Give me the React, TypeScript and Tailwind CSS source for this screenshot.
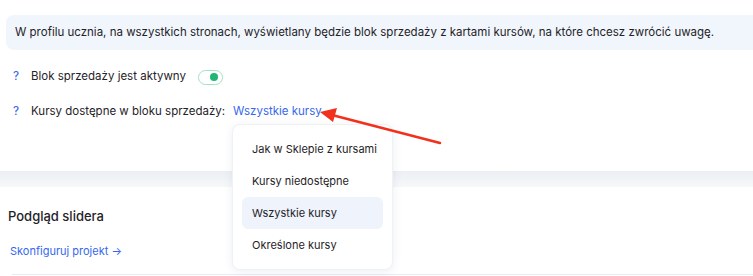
import React from 'react'

const options = ['Jak w Sklepie z kursami', 'Kursy niedostępne', 'Wszystkie kursy', 'Określone kursy']

export default function App() {
  const selected = 'Wszystkie kursy'

  return (
    <div className="relative w-[753px] h-[276px] overflow-hidden bg-white font-['Inter',sans-serif] text-[11.5px] text-[#1f2328]">
      {/* Info box */}
      <div className="pt-[15px] pl-[6px]">
        <div className="w-[800px] h-[35px] flex items-center pl-[9px] rounded-[8px] bg-[#f1f6fc]">
          W profilu ucznia, na wszystkich stronach, wyświetlany będzie blok sprzedaży z kartami kursów, na które chcesz zwrócić uwagę.
        </div>
      </div>

      {/* Settings rows */}
      <div className="pl-[13px] pt-[17px] flex flex-col">
        <div className="flex items-center h-[20px]">
          <span className="w-[18px] text-[#3b6fe6] font-medium">?</span>
          <span>Blok sprzedaży jest aktywny</span>
          <span className="ml-[12px] w-[25px] h-[15px] rounded-full border border-[#9fe3c3] bg-white flex items-center justify-end pr-[4px]">
            <span className="w-[8px] h-[8px] rounded-full bg-[#22b573]" />
          </span>
        </div>
        <div className="flex items-center h-[20px] mt-[15px]">
          <span className="w-[18px] text-[#3b6fe6] font-medium">?</span>
          <span>Kursy dostępne w bloku sprzedaży:</span>
          <span className="ml-[8px] text-[#3568ee]">Wszystkie kursy</span>
        </div>
      </div>

      {/* Divider band */}
      <div className="mt-[49px] h-[16px] bg-gradient-to-b from-[#eceff3] to-[#f6f8fa]" />

      {/* Slider preview */}
      <div className="pl-[8px] pt-[19px]">
        <div className="text-[13px] font-medium text-[#1f2328] leading-[20px]">Podgląd slidera</div>
        <div className="mt-[16px] pl-[2px] text-[11px] text-[#3568ee] leading-[18px]">Skonfiguruj projekt →</div>
      </div>
      <div className="absolute left-[12px] right-0 top-[274px] h-px bg-[#e8ebef]" />

      {/* Dropdown menu */}
      <div className="absolute left-[232px] top-[124px] w-[161px] py-[8px] px-[9px] rounded-[8px] bg-white border border-[#eef1f5] shadow-[0_2px_10px_rgba(30,50,90,0.08)] text-[11px]">
        {options.map((o) => (
          <div
            key={o}
            className={`h-[32px] flex items-center pl-[10px] rounded-[6px] whitespace-nowrap ${o === selected ? 'bg-[#eef3fc]' : ''}`}
          >
            {o}
          </div>
        ))}
      </div>

      {/* Red annotation arrow */}
      <svg className="absolute left-0 top-0 pointer-events-none" width="753" height="276">
        <line x1="440" y1="143" x2="332" y2="115" stroke="#f2301c" strokeWidth="2.5" strokeLinecap="round" />
        <polygon points="320,112 337,108 333,122" fill="#f2301c" />
      </svg>
    </div>
  )
}
